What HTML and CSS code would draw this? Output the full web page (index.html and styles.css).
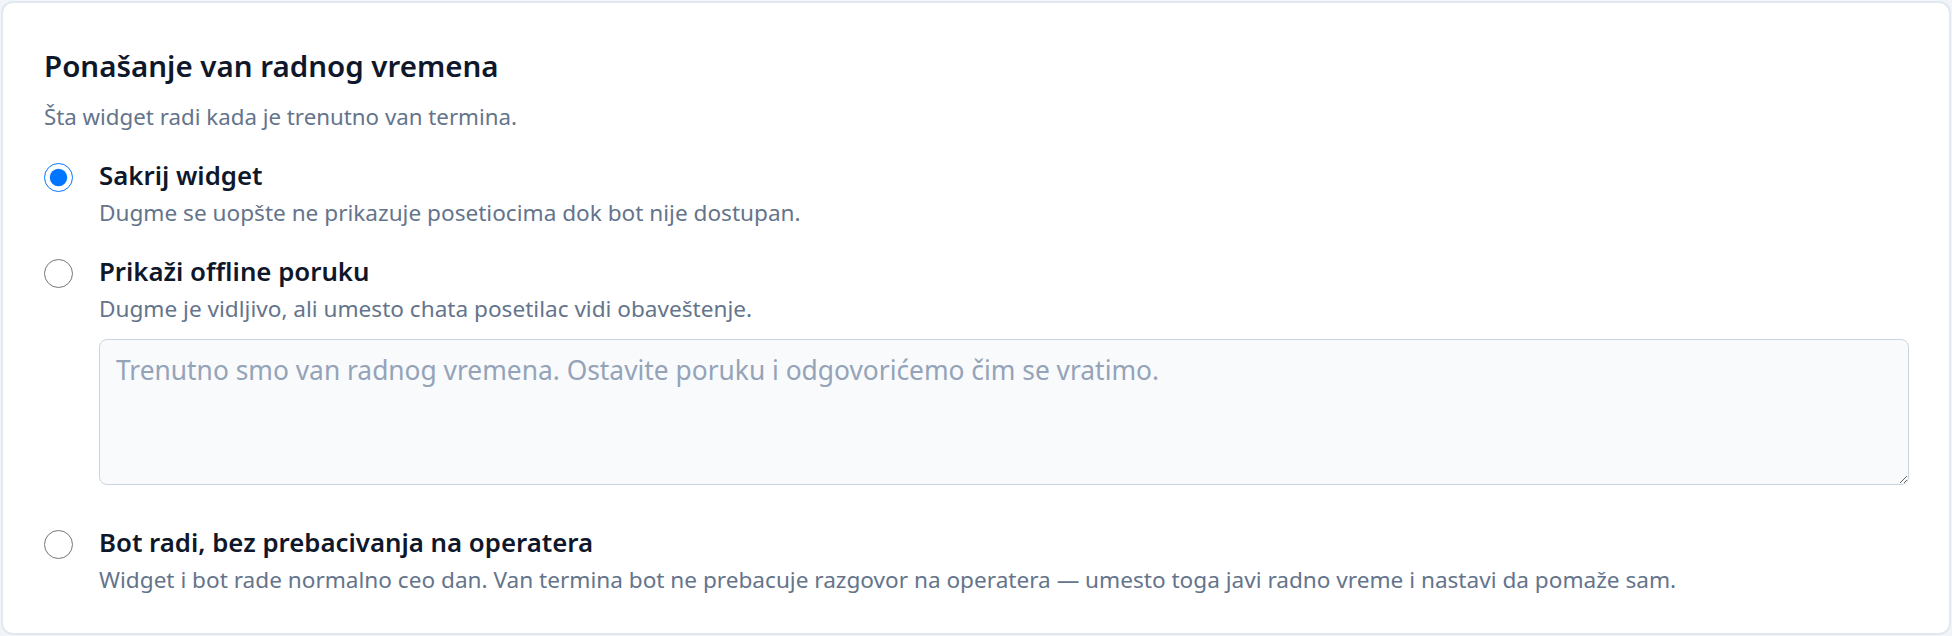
FILE: index.html
```html
<!DOCTYPE html>
<html lang="sr">
<head>
    <meta charset="UTF-8">
    <meta name="viewport" content="width=device-width, initial-scale=1.0">
    <title>Ponašanje van radnog vremena</title>
    <link rel="stylesheet" href="styles.css">
</head>
<body>
    <div class="card">
        <h2>Ponašanje van radnog vremena</h2>
        <p class="subtitle">Šta widget radi kada je trenutno van termina.</p>

        <div class="options">
            <label class="option">
                <input type="radio" name="offline" value="hide" checked>
                <span class="option-body">
                    <span class="option-title">Sakrij widget</span>
                    <span class="option-desc">Dugme se uopšte ne prikazuje posetiocima dok bot nije dostupan.</span>
                </span>
            </label>

            <div class="option">
                <input type="radio" name="offline" value="message" id="opt-message">
                <div class="option-body">
                    <label class="option-title" for="opt-message">Prikaži offline poruku</label>
                    <span class="option-desc">Dugme je vidljivo, ali umesto chata posetilac vidi obaveštenje.</span>
                    <textarea class="offline-msg" placeholder="Trenutno smo van radnog vremena. Ostavite poruku i odgovorićemo čim se vratimo."></textarea>
                </div>
            </div>

            <label class="option">
                <input type="radio" name="offline" value="bot">
                <span class="option-body">
                    <span class="option-title">Bot radi, bez prebacivanja na operatera</span>
                    <span class="option-desc">Widget i bot rade normalno ceo dan. Van termina bot ne prebacuje razgovor na operatera — umesto toga javi radno vreme i nastavi da pomaže sam.</span>
                </span>
            </label>
        </div>
    </div>
</body>
</html>
```

FILE: styles.css
```css
body {
    margin: 0;
    padding: 1px;
    background: #f1f4f8;
    font-family: "Noto Sans", "Open Sans", Arial, sans-serif;
}
.card {
    box-sizing: border-box;
    height: 634px;
    background: white;
    border: 2px solid #e2e8f0;
    border-radius: 12px;
    padding: 44px 40px 30px 41px;
}
h2 {
    margin: 0;
    font-size: 29.5px;
    line-height: 38px;
    font-weight: 600;
    color: #0f172a;
}
.subtitle {
    margin: 17px 0 0;
    font-size: 22.3px;
    line-height: 30px;
    color: #64748b;
}
.options {
    display: flex;
    flex-direction: column;
    gap: 27px;
    margin-top: 27px;
}
.option {
    display: flex;
    align-items: flex-start;
    gap: 26px;
    cursor: pointer;
}
.option input[type="radio"] {
    flex: none;
    width: 29px;
    height: 29px;
    margin: 4px 0 0;
    cursor: pointer;
}
.option-body {
    display: flex;
    flex-direction: column;
    flex: 1;
    min-width: 0;
}
.option-title {
    font-size: 25.8px;
    line-height: 32px;
    font-weight: 600;
    color: #0f172a;
    cursor: pointer;
}
.option-desc {
    margin-top: 7px;
    font-size: 22.6px;
    line-height: 30px;
    color: #64748b;
}
.offline-msg {
    box-sizing: border-box;
    height: 146px;
    margin: 15px 0 14px;
    padding: 13px 16px;
    font-family: inherit;
    font-size: 26.35px;
    line-height: 34px;
    color: #0f172a;
    background: #f8fafc;
    border: 1.5px solid #cbd5e1;
    border-radius: 8px;
    resize: vertical;
}
.offline-msg::placeholder {
    color: #94a3b8;
}
```
